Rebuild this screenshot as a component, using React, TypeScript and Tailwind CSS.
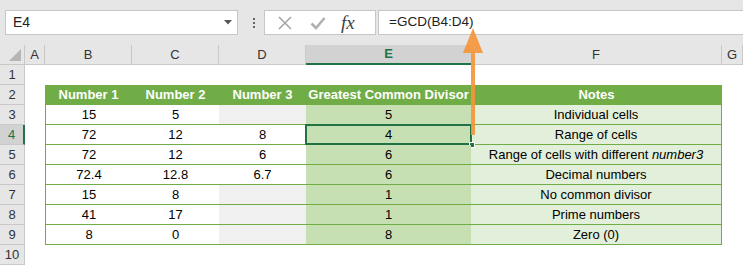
const cols = [
  { key: "A", w: "w-[20px]" },
  { key: "B", w: "w-[87px]" },
  { key: "C", w: "w-[87px]" },
  { key: "D", w: "w-[87px]" },
  { key: "E", w: "w-[165px]" },
  { key: "F", w: "w-[251px]" },
  { key: "G", w: "w-[21px]" },
];

type Row = { b: string; c: string; d: string; e: string; note: React.ReactNode };

const rows: Row[] = [
  { b: "15", c: "5", d: "", e: "5", note: "Individual cells" },
  { b: "72", c: "12", d: "8", e: "4", note: "Range of cells" },
  {
    b: "72",
    c: "12",
    d: "6",
    e: "6",
    note: (
      <span>
        Range of cells with different <i>number3</i>
      </span>
    ),
  },
  { b: "72.4", c: "12.8", d: "6.7", e: "6", note: "Decimal numbers" },
  { b: "15", c: "8", d: "", e: "1", note: "No common divisor" },
  { b: "41", c: "17", d: "", e: "1", note: "Prime numbers" },
  { b: "8", c: "0", d: "", e: "8", note: "Zero (0)" },
];

function RowHead({ n, active }: { n: number; active?: boolean }) {
  return (
    <div
      className={
        "w-[25px] h-[20px] shrink-0 flex items-center justify-center text-[13px] border-b border-[#c9c9c9] " +
        (active ? "bg-[#d2d2d2] text-[#217346] border-r-2 border-r-[#217346]" : "bg-[#e6e6e6] text-[#333] border-r border-r-[#c9c9c9]")
      }
    >
      {n}
    </div>
  );
}

function FormulaButtons() {
  return (
    <div className="w-[112px] h-[25px] ml-[9px] bg-white border border-[#c6c6c6] flex items-center">
      <svg width="16" height="16" viewBox="0 0 16 16" className="ml-[12px]">
        <path d="M2 2L14 14M14 2L2 14" stroke="#a6a6a6" strokeWidth="1.6" fill="none" />
      </svg>
      <svg width="16" height="16" viewBox="0 0 16 16" className="ml-[17px]">
        <path d="M1.5 8.5L6 13L14.5 3" stroke="#b0b0b0" strokeWidth="2.6" fill="none" />
      </svg>
      <span className="ml-[15px] font-['Liberation_Serif'] italic text-[19px] text-[#444] leading-none">
        fx
      </span>
    </div>
  );
}

export default function App() {
  return (
    <div className="relative w-[743px] h-[266px] overflow-hidden bg-white font-['Liberation_Sans',sans-serif] text-[13px] text-black">
      {/* formula bar */}
      <div className="h-[45px] bg-[#e6e6e6] flex items-start pt-[10px]">
        <div className="ml-[5px] w-[233px] h-[25px] bg-white border border-[#c6c6c6] flex items-center justify-between pl-[7px] pr-[5px]">
          <span className="text-[14px] text-[#222]">E4</span>
          <svg width="8" height="5" viewBox="0 0 8 5">
            <path d="M0 0H8L4 4.5Z" fill="#555" />
          </svg>
        </div>
        <div className="ml-[15px] h-[25px] flex flex-col justify-center gap-[2px]">
          <span className="w-[2px] h-[2px] bg-[#666]" />
          <span className="w-[2px] h-[2px] bg-[#666]" />
          <span className="w-[2px] h-[2px] bg-[#666]" />
        </div>
        <FormulaButtons />
        <div className="ml-[2px] flex-1 h-[25px] bg-white border border-[#c6c6c6] border-r-0 flex items-center pl-[10px]">
          <span className="text-[13.5px] text-[#222]">=GCD(B4:D4)</span>
        </div>
      </div>

      {/* column headers */}
      <div className="flex h-[20px]">
        <div className="w-[25px] shrink-0 bg-[#e6e6e6] border-r border-b border-[#c9c9c9] relative">
          <svg width="12" height="12" viewBox="0 0 12 12" className="absolute right-[3px] bottom-[3px]">
            <path d="M12 0V12H0Z" fill="#b5b5b5" />
          </svg>
        </div>
        {cols.map((c) => (
          <div
            key={c.key}
            className={
              c.w +
              " shrink-0 flex items-center justify-center text-[13px] " +
              (c.key === "E"
                ? "bg-[#d2d2d2] text-[#217346] font-bold border-b-2 border-[#217346]"
                : "bg-[#e6e6e6] text-[#333] border-r border-b border-[#c9c9c9]")
            }
          >
            {c.key}
          </div>
        ))}
      </div>

      {/* row 1 */}
      <div className="flex">
        <RowHead n={1} />
      </div>

      {/* row 2: table header */}
      <div className="flex">
        <RowHead n={2} />
        <div className="w-[20px] shrink-0" />
        <div className="flex h-[20px] bg-[#70ad47] text-white font-bold text-[13px]">
          <div className="w-[87px] flex items-center justify-center">Number 1</div>
          <div className="w-[87px] flex items-center justify-center">Number 2</div>
          <div className="w-[87px] flex items-center justify-center">Number 3</div>
          <div className="w-[165px] flex items-center justify-center">Greatest Common Divisor</div>
          <div className="w-[251px] flex items-center justify-center">Notes</div>
        </div>
      </div>

      {/* rows 3-9 */}
      {rows.map((r, i) => {
        const n = i + 3;
        const sel = n === 4;
        return (
          <div key={n} className="flex">
            <RowHead n={n} active={sel} />
            <div className="w-[20px] shrink-0" />
            <div className="flex h-[20px] border-l border-r border-[#70ad47]">
              <div className="w-[86px] flex items-center justify-center border-b border-[#70ad47]">{r.b}</div>
              <div className="w-[87px] flex items-center justify-center border-b border-[#70ad47]">{r.c}</div>
              <div
                className={
                  "w-[87px] flex items-center justify-center border-b border-[#70ad47] " +
                  (r.d ? "" : "bg-[#f0f0f0]")
                }
              >
                {r.d}
              </div>
              <div className="relative w-[165px] flex items-center justify-center bg-[#c6e0b4] border-b border-[#70ad47]">
                {r.e}
                {sel && (
                  <>
                    <div className="absolute -left-[1px] -top-[1px] -right-[1px] -bottom-[1px] border-2 border-[#217346]" />
                    <div className="absolute -right-[4px] -bottom-[4px] w-[6px] h-[6px] bg-[#217346] border border-white" />
                  </>
                )}
              </div>
              <div className="w-[250px] flex items-center justify-center bg-[#e2efda] border-b border-[#70ad47] whitespace-nowrap">
                {r.note}
              </div>
            </div>
          </div>
        );
      })}

      {/* row 10 */}
      <div className="flex">
        <RowHead n={10} />
      </div>

      {/* orange arrow */}
      <svg className="absolute left-[460px] top-[26px]" width="26" height="112" viewBox="0 0 26 112">
        <g fill="#f5963c" opacity="0.92">
          <path d="M13 2L23 27H3Z" />
          <rect x="11" y="27" width="4" height="82" />
        </g>
      </svg>
    </div>
  );
}
